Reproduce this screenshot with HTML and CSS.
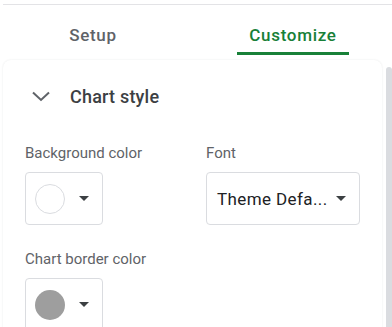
FILE: index.html
```html
<!DOCTYPE html>
<html>
<head>
<meta charset="utf-8">
<link rel="stylesheet" href="styles.css">
</head>
<body>
<div class="panel">
  <div class="tabs">
    <div class="tabcell cell1"><span class="tab">Setup</span></div>
    <div class="tabcell cell2"><span class="tab active">Customize</span></div>
  </div>
  <div class="body-row">
    <div class="card">
      <div class="section-head">
        <svg class="chev" width="18" height="11" viewBox="0 0 18 11"><path d="M1 1.5 L9 9 L17 1.5" fill="none" stroke="#5f6368" stroke-width="2"/></svg>
        <span class="section-title">Chart style</span>
      </div>
      <div class="grid">
        <div class="field">
          <div class="label">Background color</div>
          <div class="colorbox">
            <span class="swatch white"></span>
            <span class="caret"></span>
          </div>
        </div>
        <div class="field">
          <div class="label">Font</div>
          <div class="select">
            <span class="select-text">Theme Defa...</span>
            <span class="caret"></span>
          </div>
        </div>
        <div class="field">
          <div class="label">Chart border color</div>
          <div class="colorbox">
            <span class="swatch gray"></span>
            <span class="caret"></span>
          </div>
        </div>
      </div>
    </div>
    <div class="scrollbar"></div>
  </div>
</div>
</body>
</html>
```
FILE: styles.css
```css
html, body {
  margin: 0;
  padding: 0;
  background: #ffffff;
  overflow: hidden;
  height: 327px;
}
body {
  font-family: Roboto, "Noto Sans", "Liberation Sans", sans-serif;
}
.panel {
  margin-top: 4px;
  margin-left: 3px;
  border-top: 1px solid #e3e3e6;
}
.tabs {
  display: flex;
  height: 50px;
}
.tabcell {
  display: flex;
  justify-content: center;
  align-items: flex-start;
  flex-shrink: 0;
}
.cell1 { width: 180px; }
.cell2 { width: 220px; }
.tab {
  display: block;
  padding: 20px 12px 7px;
  font-size: 17px;
  line-height: 20px;
  font-weight: 500;
  color: #5f6368;
  border-bottom: 3px solid transparent;
  letter-spacing: 0.7px;
}
.tab.active {
  color: #188038;
  border-bottom-color: #188038;
}
.body-row {
  display: flex;
  margin-top: 5px;
}
.card {
  width: 379px;
  flex-shrink: 0;
  height: 300px;
  border-radius: 8px 8px 0 0;
  box-shadow: 0 0 2px rgba(60, 64, 67, 0.12);
  box-sizing: border-box;
  padding: 24px 0 0 22px;
}
.scrollbar {
  width: 6px;
  flex-shrink: 0;
  margin-left: 4px;
  margin-top: 7px;
  height: 300px;
  background: #dadce0;
  border-radius: 3px 3px 0 0;
}
.section-head {
  display: flex;
  align-items: center;
  height: 24px;
  padding-left: 7px;
}
.chev {
  display: block;
}
.section-title {
  margin-left: 20px;
  font-size: 18px;
  font-weight: 500;
  color: #3c4043;
  letter-spacing: 0.2px;
}
.grid {
  display: grid;
  grid-template-columns: 181px 154px;
  row-gap: 24px;
  margin-top: 35px;
}
.label {
  font-size: 15px;
  line-height: 20px;
  color: #5f6368;
  margin-bottom: 9px;
}
.colorbox {
  width: 78px;
  height: 53px;
  box-sizing: border-box;
  border: 1px solid #dadce0;
  border-radius: 4px;
  display: flex;
  align-items: center;
  padding-left: 9px;
}
.swatch {
  width: 30px;
  height: 30px;
  border-radius: 50%;
  box-sizing: border-box;
}
.swatch.white {
  border: 1px solid #dadce0;
  background: #ffffff;
}
.swatch.gray {
  background: #9e9e9e;
}
.caret {
  width: 0;
  height: 0;
  border-left: 5px solid transparent;
  border-right: 5px solid transparent;
  border-top: 5px solid #3c4043;
  margin-left: 14px;
}
.select {
  width: 154px;
  height: 53px;
  box-sizing: border-box;
  border: 1px solid #dadce0;
  border-radius: 4px;
  display: flex;
  align-items: center;
  padding-left: 10px;
}
.select-text {
  font-size: 17px;
  letter-spacing: 0.4px;
  color: #202124;
  width: 119px;
  white-space: nowrap;
}
.select .caret {
  margin-left: 0;
}
```
